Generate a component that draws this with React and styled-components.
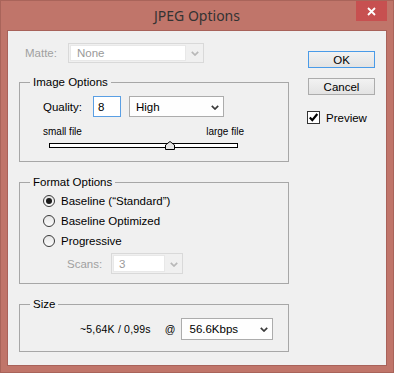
import React from "react";
import styled, { createGlobalStyle } from "styled-components";

const GlobalStyle = createGlobalStyle`
  html, body {
    margin: 0;
    padding: 0;
    background: #c0756a;
    overflow: hidden;
  }
  * {
    box-sizing: border-box;
  }
`;

const QUALITY = 8;
const QUALITY_MAX = 12;
const TRACK_WIDTH = 189;

const Chevron = ({ color }) => (
  <svg width="8" height="5" viewBox="0 0 8 5">
    <path d="M0.8 0.8 L4 4 L7.2 0.8" fill="none" stroke={color} strokeWidth="1.7" />
  </svg>
);

const Select = ({ width, height = 21, value, disabled, pad = 6 }) => (
  <S.Select $w={width} $h={height} $disabled={disabled}>
    <S.SelectValue $disabled={disabled} $pad={pad}>
      {value}
    </S.SelectValue>
    <S.Arrow>
      <Chevron color={disabled ? "#b8b8b8" : "#3a3a3a"} />
    </S.Arrow>
  </S.Select>
);

const RadioRow = ({ checked, children }) => (
  <S.RadioRow>
    <S.Radio $checked={checked} />
    <span>{children}</span>
  </S.RadioRow>
);

const App = () => {
  const thumbLeft = Math.round((QUALITY / QUALITY_MAX) * TRACK_WIDTH) - 10;

  return (
    <>
      <GlobalStyle />
      <S.Window>
        <S.TitleBar>
          <span />
          <S.Title>JPEG Options</S.Title>
          <S.Close>
            <svg width="9" height="9" viewBox="0 0 9 9">
              <path d="M1 1 L8 8 M8 1 L1 8" stroke="#fff" strokeWidth="1.8" />
            </svg>
          </S.Close>
        </S.TitleBar>

        <S.Client>
          <S.LeftColumn>
            <S.MatteRow>
              <S.MatteLabel>Matte:</S.MatteLabel>
              <Select width={136} height={20} value="None" disabled pad={6} />
            </S.MatteRow>

            <S.Group>
              <S.Legend>Image Options</S.Legend>
              <S.ImageBody>
                <S.QualityRow>
                  <S.QualityLabel>Quality:</S.QualityLabel>
                  <S.NumberInput>{QUALITY}</S.NumberInput>
                  <Select width={95} value="High" />
                </S.QualityRow>
                <S.SliderLabels>
                  <span>small file</span>
                  <span>large file</span>
                </S.SliderLabels>
                <S.Slider>
                  <S.Track />
                  <S.Thumb style={{ left: thumbLeft }}>
                    <svg width="10" height="9" viewBox="0 0 10 9">
                      <polygon
                        points="0.5,8.5 0.5,4 5,0.5 9.5,4 9.5,8.5"
                        fill="#e4e4e4"
                        stroke="#000"
                        strokeWidth="1"
                      />
                    </svg>
                  </S.Thumb>
                </S.Slider>
              </S.ImageBody>
            </S.Group>

            <S.Group $mt={13}>
              <S.Legend>Format Options</S.Legend>
              <S.FormatBody>
                <RadioRow checked>Baseline (“Standard”)</RadioRow>
                <RadioRow>Baseline Optimized</RadioRow>
                <RadioRow>Progressive</RadioRow>
                <S.ScansRow>
                  <S.ScansLabel>Scans:</S.ScansLabel>
                  <Select width={72} value="3" disabled pad={5} />
                </S.ScansRow>
              </S.FormatBody>
            </S.Group>

            <S.Group $mt={13}>
              <S.Legend>Size</S.Legend>
              <S.SizeBody>
                <S.SizeText>~5,64K / 0,99s</S.SizeText>
                <S.At>@</S.At>
                <Select width={92} height={22} value="56.6Kbps" pad={7} />
              </S.SizeBody>
            </S.Group>
          </S.LeftColumn>

          <S.RightColumn>
            <S.Button $default>OK</S.Button>
            <S.Button>Cancel</S.Button>
            <S.CheckRow>
              <S.Checkbox>
                <svg width="11" height="11" viewBox="0 0 11 11">
                  <path d="M1.8 5.6 L4.3 8.2 L9.3 2" fill="none" stroke="#000" strokeWidth="2.2" />
                </svg>
              </S.Checkbox>
              <span>Preview</span>
            </S.CheckRow>
          </S.RightColumn>
        </S.Client>
      </S.Window>
    </>
  );
};

const S = {};

S.Window = styled.div`
  width: 394px;
  height: 373px;
  background: #c0756a;
  border: 1px solid #a9645a;
  padding: 0 6px 6px;
  display: flex;
  flex-direction: column;
  font-family: "Liberation Sans", Arial, sans-serif;
  font-size: 11.5px;
  color: #000;
`;

S.TitleBar = styled.div`
  height: 29px;
  flex: none;
  display: grid;
  grid-template-columns: 1fr auto 1fr;
  align-items: center;
`;

S.Title = styled.span`
  font-family: "Noto Sans", "Open Sans", sans-serif;
  font-size: 14px;
  color: #333;
  padding-bottom: 1px;
`;

S.Close = styled.div`
  justify-self: end;
  align-self: start;
  width: 31px;
  height: 20px;
  background: #c75050;
  display: flex;
  align-items: center;
  justify-content: center;
`;

S.Client = styled.div`
  flex: 1;
  background: #f0f0f0;
  border: 1px solid #a8625a;
  display: flex;
  padding: 12px 0 0 11px;
`;

S.LeftColumn = styled.div`
  width: 270px;
  display: flex;
  flex-direction: column;
`;

S.RightColumn = styled.div`
  width: 67px;
  margin-left: 19px;
  padding-top: 8px;
  display: flex;
  flex-direction: column;
`;

S.MatteRow = styled.div`
  height: 20px;
  display: flex;
  align-items: center;
  padding-left: 6px;
  margin-bottom: 12px;
`;

S.MatteLabel = styled.span`
  width: 43px;
  color: #a0a0a0;
`;

S.Select = styled.div`
  width: ${(p) => p.$w}px;
  height: ${(p) => p.$h}px;
  flex: none;
  display: flex;
  border: 1px solid ${(p) => (p.$disabled ? "#d9d9d9" : "#acacac")};
  background: ${(p) => (p.$disabled ? "#f0f0f0" : "#fefefe")};
  padding: ${(p) => (p.$disabled ? "1px 0 1px 1px" : "0")};
`;

S.SelectValue = styled.div`
  flex: 1;
  display: flex;
  align-items: center;
  padding-left: ${(p) => p.$pad}px;
  color: ${(p) => (p.$disabled ? "#999" : "#000")};
  background: ${(p) => (p.$disabled ? "#fff" : "transparent")};
  border: ${(p) => (p.$disabled ? "1px solid #e8e8e8" : "none")};
`;

S.Arrow = styled.div`
  width: 17px;
  flex: none;
  display: flex;
  align-items: center;
  justify-content: center;
  padding-top: 1px;
`;

S.Group = styled.fieldset`
  margin: ${(p) => p.$mt || 0}px 0 0;
  padding: 0;
  min-width: 0;
  border: 1px solid #a7a7a7;
`;

S.Legend = styled.legend`
  margin-left: 10px;
  padding: 0 3px;
  line-height: 14px;
  font-size: 11.5px;
`;

S.ImageBody = styled.div`
  padding: 7px 0 10px 23px;
`;

S.QualityRow = styled.div`
  height: 21px;
  display: flex;
  align-items: center;
`;

S.QualityLabel = styled.span`
  width: 50px;
`;

S.NumberInput = styled.div`
  width: 28px;
  height: 21px;
  margin-right: 8px;
  border: 1px solid #5a9fe4;
  background: #fff;
  display: flex;
  align-items: center;
  padding-left: 4px;
`;

S.SliderLabels = styled.div`
  width: 201px;
  margin-top: 9px;
  height: 12px;
  line-height: 12px;
  font-size: 10px;
  display: flex;
  justify-content: space-between;
`;

S.Slider = styled.div`
  position: relative;
  width: ${TRACK_WIDTH}px;
  height: 10px;
  margin: 3px 0 0 6px;
  padding-top: 2px;
`;

S.Track = styled.div`
  height: 5px;
  border: 1px solid #000;
  background: #fff;
`;

S.Thumb = styled.div`
  position: absolute;
  top: 0;
  width: 10px;
  height: 9px;
  display: flex;
`;

S.FormatBody = styled.div`
  padding: 2px 0 9px 23px;
`;

S.RadioRow = styled.div`
  height: 20px;
  display: flex;
  align-items: center;
  gap: 6px;
`;

S.Radio = styled.span`
  width: 12px;
  height: 12px;
  border-radius: 50%;
  border: 1px solid #3a3a3a;
  background: linear-gradient(#e6e6e6, #fbfbfb);
  display: flex;
  align-items: center;
  justify-content: center;

  &::after {
    content: "";
    display: ${(p) => (p.$checked ? "block" : "none")};
    width: 6px;
    height: 6px;
    border-radius: 50%;
    background: #1a1a1a;
  }
`;

S.ScansRow = styled.div`
  height: 21px;
  margin-top: 2px;
  padding-left: 24px;
  display: flex;
  align-items: center;
`;

S.ScansLabel = styled.span`
  width: 44px;
  color: #a0a0a0;
`;

S.SizeBody = styled.div`
  padding: 7px 0 11px 60px;
  display: flex;
  align-items: center;
`;

S.SizeText = styled.span`
  font-size: 10.5px;
  letter-spacing: 0.2px;
`;

S.At = styled.span`
  margin: 0 6px 0 14px;
  font-size: 10.5px;
`;

S.Button = styled.div`
  height: 17px;
  margin-bottom: 10px;
  border: 1px solid ${(p) => (p.$default ? "#4a9be8" : "#acacac")};
  background: linear-gradient(#f2f2f2, #e3e3e3);
  display: flex;
  align-items: center;
  justify-content: center;
`;

S.CheckRow = styled.div`
  margin-top: 6px;
  margin-left: -1px;
  display: flex;
  align-items: center;
  gap: 6px;
`;

S.Checkbox = styled.span`
  width: 13px;
  height: 13px;
  border: 1px solid #333;
  background: #fff;
  display: flex;
  align-items: center;
  justify-content: center;
`;

export default App;
